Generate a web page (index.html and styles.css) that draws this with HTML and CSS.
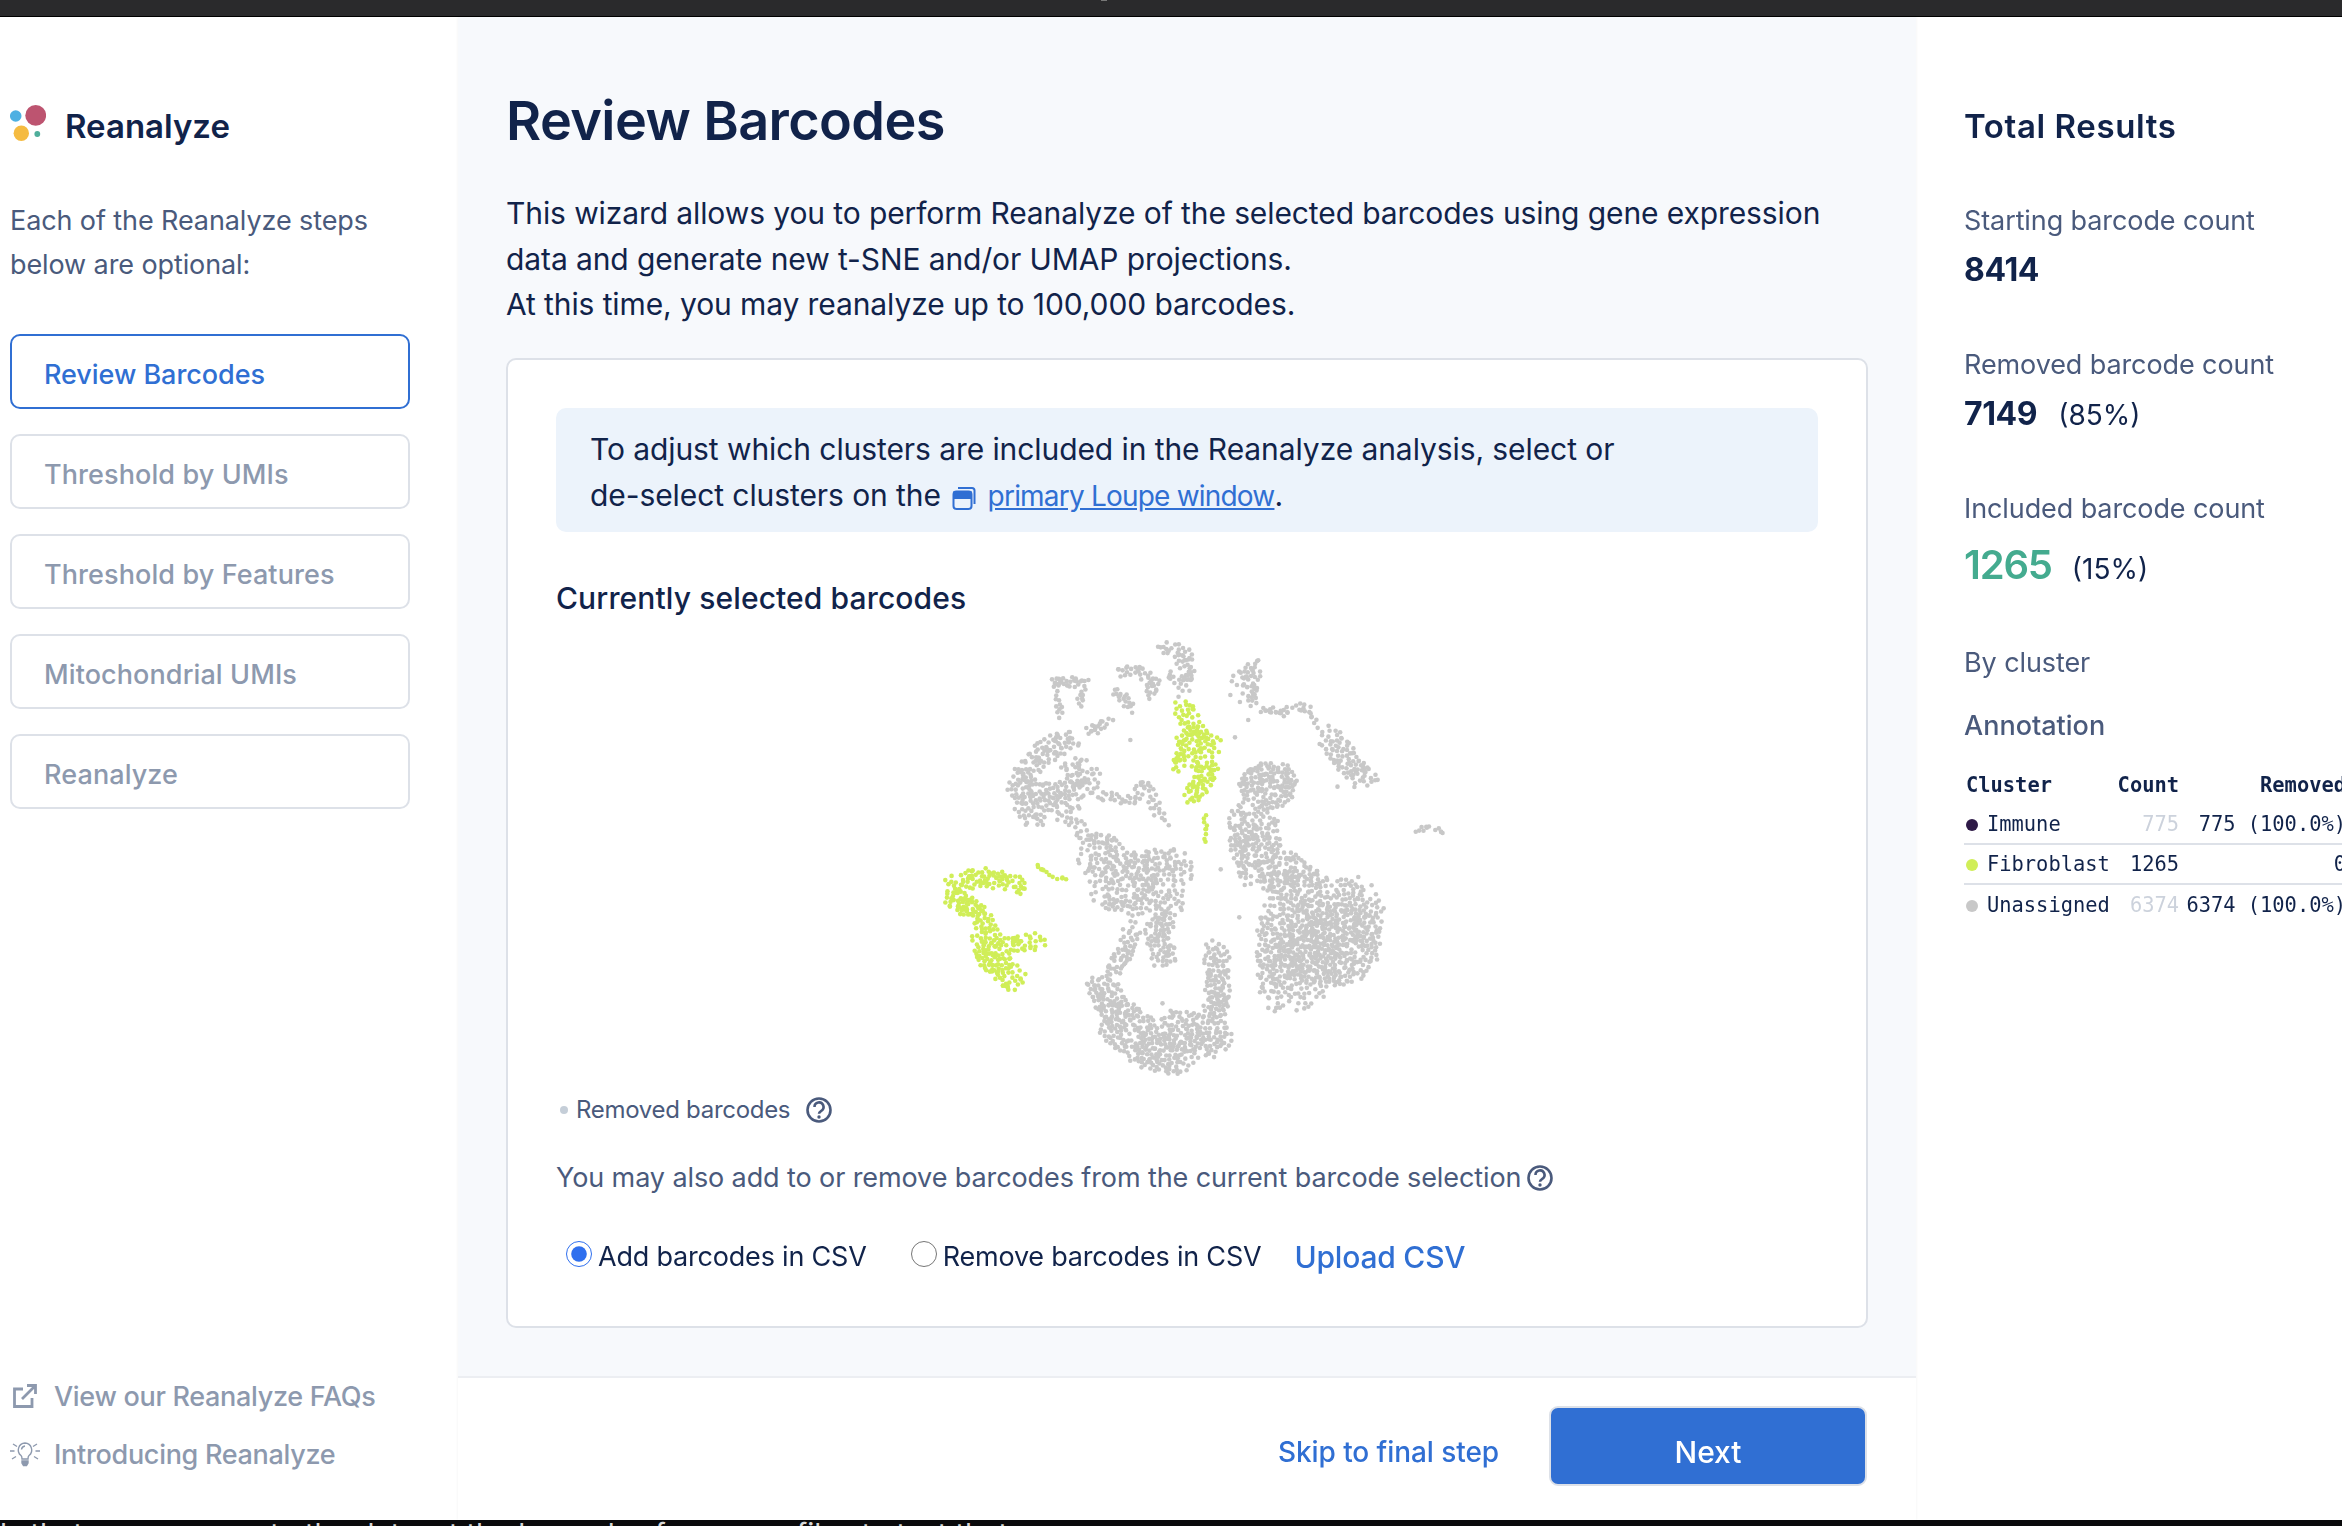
FILE: index.html
```html
<!DOCTYPE html>
<html lang="en">
<head>
    <meta charset="UTF-8">
    <title>Reanalyze</title>
    <link rel="stylesheet" href="styles.css">
</head>
<body>
  <div class="topBar"></div>
  <div class="app">
    <div class="sidebar">
      <div>
        <div class="brand">
          <svg class="brandLogo" viewBox="0 0 36 36" width="36" height="36">
            <circle cx="5.7" cy="11" r="5.8" fill="#4eb0e2"/>
            <circle cx="25.7" cy="10.400" r="10.400" fill="#bd5470"/>
            <circle cx="11.300" cy="28.300" r="7.700" fill="#f5bb41"/>
            <circle cx="27.300" cy="29" r="2.900" fill="#4fae9b"/>
          </svg>
          <h2>Reanalyze</h2>
        </div>
        <p class="intro">Each of the Reanalyze steps below are optional:</p>
        <div class="steps">
          <div class="step active">Review Barcodes</div>
          <div class="step">Threshold by UMIs</div>
          <div class="step">Threshold by Features</div>
          <div class="step">Mitochondrial UMIs</div>
          <div class="step">Reanalyze</div>
        </div>
      </div>
      <div class="sideLinks">
        <a class="sideLink">
          <svg viewBox="0 0 26 26" width="30" height="26" fill="none" stroke="#8d99ae" stroke-width="2.800">
            <path d="M11 6H2.500v17.500H20V15"/>
            <path d="M10 16L23 3M15 2.500h8.500V11"/>
          </svg>
          View our Reanalyze FAQs
        </a>
        <a class="sideLink">
          <svg viewBox="0 0 30 26" width="30" height="26" fill="none" stroke="#8d99ae" stroke-width="1.400">
            <path d="M15 2a7 7 0 0 0-4 12.500c.8.700 1 2 1 3.500h6c0-1.500.2-2.800 1-3.500A7 7 0 0 0 15 2z"/>
            <path d="M15 5a4 4 0 0 0-3.500 3.500M3 3l4 2.500M0 10h4.500M2 18l4-2.500M27 3l-4 2.500M30 10h-4.500M28 18l-4-2.500"/>
            <path d="M12 20h6v2l-1.500 2.500h-3L12 22z" fill="#8d99ae"/>
          </svg>
          Introducing Reanalyze
        </a>
      </div>
    </div>

    <div class="main">
      <div class="content">
        <h1>Review Barcodes</h1>
        <p class="lead">This wizard allows you to perform Reanalyze of the selected barcodes using gene expression<br>data and generate new t-SNE and/or UMAP projections.<br>At this time, you may reanalyze up to 100,000 barcodes.</p>
        <div class="card">
          <div class="callout">
            To adjust which clusters are included in the Reanalyze analysis, select or<br>
            de-select clusters on the
            <svg class="windowIcon" viewBox="0 0 24 24" width="24" height="24" fill="none" stroke="#306fd3" stroke-width="2">
              <path d="M6 2h14a2.500 2.500 0 0 1 2.500 2.500V18"/>
              <rect x="1.500" y="5.500" width="18" height="17.500" rx="3"/>
              <path d="M2 6.500h17v5.500H2z" fill="#306fd3"/>
            </svg>
            <a class="loupeLink">primary Loupe window</a>.
          </div>
          <h3>Currently selected barcodes</h3>
          <canvas id="plot" class="plot" width="560" height="480"></canvas>
          <div class="legend">
            <span class="legendDot"></span>
            <span>Removed barcodes</span>
            <svg class="helpIcon legendHelp" viewBox="0 0 26 26" width="26" height="26"><use href="#help"/></svg>
          </div>
          <div class="note">
            You may also add to or remove barcodes from the current barcode selection
            <svg class="helpIcon" viewBox="0 0 26 26" width="26" height="26"><use href="#help"/></svg>
          </div>
          <div class="csvRow">
            <label class="radio"><input type="radio" name="csv" checked>Add barcodes in CSV</label>
            <label class="radio"><input type="radio" name="csv">Remove barcodes in CSV</label>
            <a class="upload">Upload CSV</a>
          </div>
        </div>
      </div>
      <div class="footer">
        <a class="skip">Skip to final step</a>
        <button class="nextBtn">Next</button>
      </div>
    </div>

    <div class="results">
      <h2>Total Results</h2>
      <div class="stat">
        <div class="statLabel">Starting barcode count</div>
        <div class="statValue"><b>8414</b></div>
      </div>
      <div class="stat">
        <div class="statLabel">Removed barcode count</div>
        <div class="statValue"><b>7149</b><span>(85%)</span></div>
      </div>
      <div class="stat">
        <div class="statLabel">Included barcode count</div>
        <div class="statValue included"><b>1265</b><span>(15%)</span></div>
      </div>
      <div class="statLabel byCluster">By cluster</div>
      <div class="annotation">Annotation</div>
      <table class="clusters">
        <thead>
          <tr><th>Cluster</th><th>Count</th><th>Removed</th></tr>
        </thead>
        <tbody>
          <tr>
            <td><span class="dot" style="background:#2e1a47"></span>Immune</td>
            <td class="faded">775</td>
            <td>775 (100.0%)</td>
          </tr>
          <tr>
            <td><span class="dot" style="background:#d0ee58"></span>Fibroblast</td>
            <td>1265</td>
            <td>0</td>
          </tr>
          <tr>
            <td><span class="dot" style="background:#c8c8c8"></span>Unassigned</td>
            <td class="faded">6374</td>
            <td>6374 (100.0%)</td>
          </tr>
        </tbody>
      </table>
    </div>
  </div>
  <div class="bottomBar">ls that are common to the dataset the barcodes from your files to test that</div>

  <svg width="0" height="0" class="defs">
    <symbol id="help" viewBox="0 0 26 26">
      <circle cx="13" cy="13" r="11.500" fill="none" stroke="#4a5a7c" stroke-width="2.600"/>
      <path d="M8.500 10a4.500 4.500 0 1 1 6.800 3.800c-1.500.9-2.300 1.600-2.300 3" fill="none" stroke="#4a5a7c" stroke-width="2.600"/>
      <circle cx="13" cy="20" r="1.700" fill="#4a5a7c"/>
    </symbol>
  </svg>
  <script src="scatter.js"></script>
</body>
</html>
```
FILE: styles.css
```css
*
{
    box-sizing: border-box;
}
html, body
{
    margin: 0;
    height: 100%;
    overflow: hidden;
}
body
{
    display: flex;
    flex-direction: column;
    font-family: Inter, "Liberation Sans", sans-serif;
    color: #11234a;
    background: white;
}
.defs
{
    position: absolute;
}
.topBar
{
    height: 17px;
    flex: none;
    background: #2a2a2c;
    border-bottom: 1px solid #000;
}
.topBar::before
{
    content: "";
    display: block;
    width: 6px;
    height: 1px;
    margin-left: 1101px;
    background: #777;
}
.bottomBar
{
    height: 6px;
    flex: none;
    overflow: hidden;
    background: #0a0a0c;
    color: #d8d8d8;
    font-size: 29px;
    line-height: 27px;
    white-space: nowrap;
}
.app
{
    flex: 1;
    display: flex;
    min-height: 0;
}

/* left column */
.sidebar
{
    width: 458px;
    flex: none;
    padding: 0 48px 50px 10px;
    display: flex;
    flex-direction: column;
    justify-content: space-between;
}
.brand
{
    display: flex;
    align-items: center;
    gap: 19px;
    margin-top: 87px;
    height: 44px;
}
.brandLogo
{
    margin-top: -6px;
}
.brand h2
{
    margin: 0;
    font-size: 33px;
    font-weight: 600;
}
.intro
{
    margin: 51px 0 0;
    font-size: 27px;
    line-height: 44px;
    color: #4a5a7c;
    letter-spacing: -0.1px;
}
.steps
{
    margin-top: 47px;
    display: flex;
    flex-direction: column;
    gap: 25px;
}
.step
{
    height: 75px;
    padding: 6px 0 0 32px;
    display: flex;
    align-items: center;
    border: 2px solid #dde1e8;
    border-radius: 10px;
    font-size: 27px;
    font-weight: 500;
    color: #8d99ae;
    letter-spacing: 0.1px;
}
.step.active
{
    border-color: #306fd3;
    color: #306fd3;
    letter-spacing: -0.05px;
}
.sideLinks
{
    display: flex;
    flex-direction: column;
    gap: 26px;
}
.sideLink
{
    display: flex;
    align-items: center;
    gap: 14px;
    height: 32px;
    font-size: 27px;
    font-weight: 500;
    color: #8d99ae;
    letter-spacing: -0.3px;
}

/* middle column */
.main
{
    flex: 1;
    display: flex;
    flex-direction: column;
    background: #f7f9fc;
    box-shadow: 0 0 3px rgba(0,0,0,0.06);
}
.content
{
    flex: 1;
    padding: 0 48px;
}
h1
{
    margin: 72px 0 0;
    font-size: 54px;
    line-height: 64px;
    font-weight: 600;
    letter-spacing: -0.6px;
}
.lead
{
    margin: 38px 0 0;
    font-size: 30px;
    line-height: 45.600px;
    letter-spacing: -0.1px;
}
.card
{
    margin-top: 30px;
    height: 970px;
    padding: 48px 48px 0;
    background: white;
    border: 2px solid #dde1e8;
    border-radius: 10px;
}
.callout
{
    height: 124px;
    padding: 18px 34px;
    background: #ecf3fb;
    border-radius: 10px;
    font-size: 30px;
    line-height: 46px;
    letter-spacing: -0.08px;
}
.windowIcon
{
    vertical-align: -4px;
    margin: 0 3px;
}
.loupeLink
{
    color: #306fd3;
    font-size: 28px;
    letter-spacing: -0.8px;
    text-decoration: underline;
}
h3
{
    margin: 44px 0 0;
    font-size: 30px;
    line-height: 44px;
    font-weight: 500;
    letter-spacing: 0.12px;
}
.plot
{
    display: block;
    margin: 0 0 0 344px;
}
.legend
{
    display: flex;
    align-items: center;
    height: 30px;
    margin-top: -5px;
    font-size: 24px;
    color: #4a5a7c;
    padding-left: 4px;
    letter-spacing: -0.3px;
}
.legendDot
{
    width: 8px;
    height: 8px;
    margin-right: 8px;
    border-radius: 50%;
    background: #c5ced8;
}
.legendHelp
{
    margin-left: 16px;
}
.note
{
    display: flex;
    align-items: center;
    gap: 6px;
    height: 40px;
    margin-top: 33px;
    font-size: 27px;
    color: #4a5a7c;
    letter-spacing: -0.1px;
}
.csvRow
{
    display: flex;
    align-items: center;
    height: 44px;
    margin-top: 37px;
    padding-left: 10px;
    font-size: 27px;
}
.radio
{
    display: flex;
    align-items: center;
    gap: 6px;
    margin-right: 44px;
    letter-spacing: -0.2px;
}
.radio:nth-child(2)
{
    margin-right: 33px;
}
.radio input
{
    width: 26px;
    height: 26px;
    margin: 0 0 6px;
    accent-color: #2f6fee;
}
.upload
{
    font-size: 30px;
    font-weight: 500;
    color: #306fd3;
    letter-spacing: -0.2px;
}
.footer
{
    height: 144px;
    flex: none;
    display: flex;
    align-items: center;
    justify-content: flex-end;
    gap: 50px;
    padding: 0 49px 6px 0;
    background: white;
    border-top: 2px solid #eceef2;
}
.skip
{
    margin-top: 12px;
    font-size: 28px;
    font-weight: 500;
    color: #306fd3;
    letter-spacing: -0.07px;
}
.nextBtn
{
    width: 318px;
    height: 80px;
    padding-top: 12px;
    border: 2px solid #dde1e8;
    border-radius: 9px;
    background: #306fd3;
    color: white;
    font-family: inherit;
    font-size: 30px;
    font-weight: 500;
}

/* right column */
.results
{
    width: 426px;
    flex: none;
    padding-left: 48px;
    overflow: hidden;
}
.results h2
{
    margin: 87px 0 0;
    height: 44px;
    line-height: 44px;
    font-size: 33px;
    font-weight: 600;
    letter-spacing: 0.6px;
}
.stat
{
    height: 144px;
}
.stat:first-of-type
{
    margin-top: 53px;
}
.statLabel
{
    height: 40px;
    line-height: 40px;
    font-size: 27px;
    color: #4a5a7c;
    white-space: nowrap;
    letter-spacing: -0.1px;
}
.statValue
{
    display: flex;
    align-items: baseline;
    gap: 21px;
    height: 48px;
    line-height: 48px;
    margin-top: 5px;
    font-size: 28px;
    white-space: nowrap;
}
.statValue b
{
    font-size: 32px;
    font-weight: 700;
    letter-spacing: -0.4px;
}
.statValue.included
{
    height: 56px;
    line-height: 56px;
    margin-top: 8px;
    gap: 20px;
}
.statValue.included b
{
    font-size: 40px;
    font-weight: 600;
    letter-spacing: -1.2px;
    color: #44ab8f;
}
.byCluster
{
    margin-top: 10px;
}
.annotation
{
    margin-top: 21px;
    height: 44px;
    line-height: 44px;
    font-size: 27px;
    font-weight: 500;
    color: #4a5a7c;
}
.clusters
{
    margin-top: 16px;
    width: 382px;
    table-layout: fixed;
    border-collapse: collapse;
    font-family: "DejaVu Sans Mono", monospace;
    font-size: 20.400px;
    white-space: nowrap;
}
.clusters th
{
    height: 40px;
    font-weight: 700;
    text-align: right;
    padding: 2px 0 0;
}
.clusters th:first-child
{
    text-align: left;
    padding-left: 2px;
    width: 150px;
}
.clusters th:nth-child(2)
{
    width: 65px;
}
.clusters td
{
    height: 40px;
    padding: 0;
    text-align: right;
    border-bottom: 2px solid #dde1e8;
}
.clusters tr:last-child td
{
    border-bottom: none;
}
.clusters td:first-child
{
    text-align: left;
    padding-left: 2px;
}
.clusters .faded
{
    color: #ccd2dc;
}
.dot
{
    display: inline-block;
    width: 12px;
    height: 12px;
    margin-right: 9px;
    border-radius: 50%;
}
```
FILE: scatter.js
```js
// t-SNE style plot. Coordinates are on a 1568x1440 grid, squeezed into the 560x480 canvas
let seed = 42;
function rnd()
{
    seed = (seed * 1664525 + 1013904223) % 4294967296;
    return seed / 4294967296;
}

// [spread, tries, x1, y1, x2, y2, ...]
const grey = [
    [24, 120, 745,85, 790,100, 805,150, 790,210],
    [10, 12, 750,150, 770,180],
    [16, 80, 415,180, 470,185, 525,190],
    [10, 30, 440,195, 450,290],
    [10, 24, 510,205, 505,260],
    [18, 90, 610,155, 660,150, 710,180, 700,225],
    [16, 50, 610,215, 650,265],
    [16, 50, 525,340, 590,305],
    [26, 120, 950,190, 985,140, 975,250],
    [14, 90, 1000,260, 1060,280, 1130,255, 1170,320],
    [36, 220, 1205,350, 1250,420, 1300,480],
    [8, 40, 1440,638, 1475,622, 1520,632],
    [36, 320, 480,350, 400,400, 350,470, 335,530, 380,600],
    [40, 340, 490,430, 525,480, 450,520, 400,520, 500,610],
    [18, 120, 570,525, 650,545, 690,490, 745,625],
    [24, 90, 510,650, 600,675],
    [58, 480, 545,710, 650,750, 770,740],
    [48, 280, 570,810, 640,845, 765,810],
    [36, 260, 760,840, 720,950, 740,1015],
    [24, 110, 650,925, 630,1000, 600,1050],
    [42, 280, 560,1090, 610,1200],
    [68, 700, 620,1210, 700,1280, 770,1300],
    [58, 360, 780,1220, 870,1260],
    [34, 320, 880,1190, 890,1100, 885,990],
    [70, 420, 1020,510, 1040,490],
    [68, 520, 985,600, 1010,750],
    [72, 420, 1060,760, 1130,810],
    [100, 800, 1250,850, 1230,1010],
    [92, 900, 1100,900, 1100,1100],
    [130, 900, 1180,960, 1190,980]
];
const green = [
    [28, 220, 150,790, 230,770, 345,795],
    [30, 220, 150,830, 230,890],
    [40, 360, 240,930, 250,1010, 320,1075],
    [28, 130, 300,975, 390,960],
    [7, 24, 380,720, 410,765, 470,785],
    [28, 220, 790,265, 825,330, 875,375],
    [20, 90, 795,350, 780,445],
    [14, 60, 830,370, 830,450],
    [27, 170, 870,430, 820,535],
    [4, 24, 855,580, 855,680]
];
const strays = [[645,360],[938,352],[898,748],[950,892],[1225,500],[1175,372],[925,225],[975,300],[735,1150]];
const placed = [];

function isCrowded(x, y)
{
    for (let i = 0; i < placed.length; i++)
    {
        const dx = placed[i][0] - x, dy = placed[i][1] - y;
        if (dx * dx + dy * dy < 11) return rnd() < 0.85;
    }
    return false;
}

function dot(ctx, x, y)
{
    ctx.beginPath();
    ctx.arc(x, y, 2.3, 0, Math.PI * 2);
    ctx.fill();
}

function drawCluster(ctx, shapes, color)
{
    ctx.fillStyle = color;
    shapes.forEach(shape => {
        const spread = shape[0], tries = shape[1], pts = shape.slice(2);
        const segs = pts.length / 2 - 1;
        for (let i = 0; i < tries; i++)
        {
            const s = Math.floor(rnd() * segs) * 2;
            const t = rnd();
            const a = rnd() * Math.PI * 2;
            const d = Math.sqrt(rnd()) * spread;
            const x = (pts[s] + (pts[s + 2] - pts[s]) * t + Math.cos(a) * d * 1.1) / 2.8;
            const y = (pts[s + 1] + (pts[s + 3] - pts[s + 1]) * t + Math.sin(a) * d) / 3;
            if (isCrowded(x, y)) continue;
            placed.push([x, y]);
            dot(ctx, x, y);
        }
    });
}

const ctx = document.getElementById("plot").getContext("2d");
drawCluster(ctx, grey, "#c8c8c8");
drawCluster(ctx, green, "#d0ee58");
ctx.fillStyle = "#c8c8c8";
strays.forEach(p => dot(ctx, p[0] / 2.8, p[1] / 3));
```
